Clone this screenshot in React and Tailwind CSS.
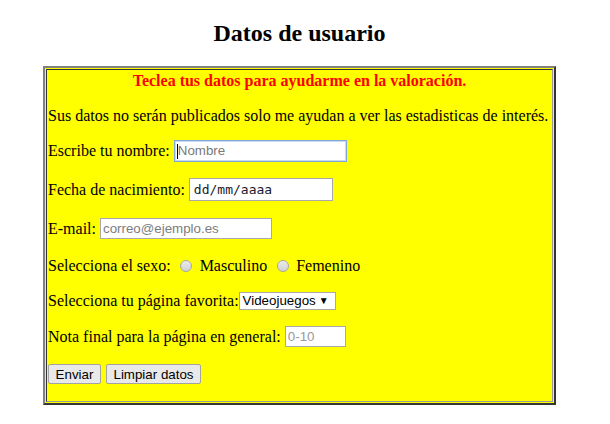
import React from 'react';

const inputFont = { fontFamily: '"Liberation Sans", Arial, sans-serif' };

const Radio = ({ label }) => (
    <>
        <span className="ml-[9px] mr-[3px] flex h-[13px] w-[13px] items-center justify-center">
            <span className="block h-[12px] w-[12px] rounded-full border border-[#a6a6a6] bg-gradient-to-b from-[#ececec] to-[#d2d2d2]" />
        </span>
        <span className="ml-[4px]">{label}</span>
    </>
);

const App = () => {
    return (
        <div className="min-h-screen bg-white text-black" style={{ fontFamily: '"Liberation Serif", "Times New Roman", serif' }}>
            <div className="ml-[43px] w-[513px]">
                <h2 className="pt-[19px] h-[47px] text-center text-[24px] font-bold leading-[28px]">Datos de usuario</h2>

                <div className="mt-[19px] border-2 border-t-[#808080] border-l-[#808080] border-r-[#353535] border-b-[#353535] bg-[#ffff00] p-[1px]">
                    <div className="border border-t-[#353535] border-l-[#353535] border-r-[#9a9a9a] border-b-[#9a9a9a] px-[1px] pt-[2px] pb-[17px] text-[16px]">
                        <div className="h-[18px] text-center font-bold leading-[18px] text-[#ff0000]">
                            Teclea tus datos para ayudarme en la valoración.
                        </div>

                        <div className="mt-[17px] h-[18px] leading-[18px]">
                            Sus datos no serán publicados solo me ayudan a ver las estadisticas de interés.
                        </div>

                        <div className="mt-[15px] flex h-[22px] items-center">
                            <span>Escribe tu nombre:</span>
                            <div className="relative ml-[4px] h-[22px] w-[173px] border border-[#7ea6d8] bg-white shadow-[0_0_0_1px_#c9dcf2_inset]">
                                <span className="absolute left-[2px] top-[3px] h-[15px] w-px bg-black" />
                                <span className="absolute left-[3px] top-[2px] text-[13.33px] leading-[16px] text-[#7a7a7a]" style={inputFont}>Nombre</span>
                            </div>
                        </div>

                        <div className="mt-[16px] flex h-[23px] items-center">
                            <span>Fecha de nacimiento:</span>
                            <div className="ml-[4px] flex h-[23px] w-[144px] items-center border border-[#a9a9a9] bg-white pl-[4px] text-[13px] text-[#1a1a2a]" style={{ fontFamily: '"DejaVu Sans Mono", "Liberation Mono", monospace' }}>
                                dd/mm/aaaa
                            </div>
                        </div>

                        <div className="mt-[17px] flex h-[21px] items-center">
                            <span>E-mail:</span>
                            <input
                                readOnly
                                placeholder="correo@ejemplo.es"
                                className="ml-[4px] h-[21px] w-[172px] border border-[#a9a9a9] bg-white px-[2px] text-[13.33px] outline-none placeholder:text-[#7d7d7d]"
                                style={inputFont}
                            />
                        </div>

                        <div className="mt-[18px] flex h-[18px] items-center">
                            <span>Selecciona el sexo:</span>
                            <Radio label="Masculino" />
                            <Radio label="Femenino" />
                        </div>

                        <div className="mt-[17px] flex h-[18px] items-center">
                            <span>Selecciona tu página favorita:</span>
                            <div className="flex h-[18px] w-[97px] items-center justify-between border border-[#a9a9a9] bg-white pl-[3px] pr-[6px] text-[13.33px]" style={inputFont}>
                                <span>Videojuegos</span>
                                <span className="text-[10px] leading-none">▼</span>
                            </div>
                        </div>

                        <div className="mt-[16px] flex h-[21px] items-center">
                            <span>Nota final para la página en general:</span>
                            <input
                                readOnly
                                placeholder="0-10"
                                className="ml-[4px] h-[21px] w-[61px] border border-[#a9a9a9] bg-white px-[2px] text-[13.33px] outline-none placeholder:text-[#999999]"
                                style={inputFont}
                            />
                        </div>

                        <div className="mt-[17px] flex h-[20px] items-center gap-[5px] text-[13.33px]" style={inputFont}>
                            <button className="h-[20px] w-[53px] rounded-[2px] border border-[#a3a3a3] bg-[#e9e9e9]">Enviar</button>
                            <button className="h-[20px] w-[95px] rounded-[2px] border border-[#a3a3a3] bg-[#e9e9e9]">Limpiar datos</button>
                        </div>
                    </div>
                </div>
            </div>
        </div>
    );
};

export default App;
